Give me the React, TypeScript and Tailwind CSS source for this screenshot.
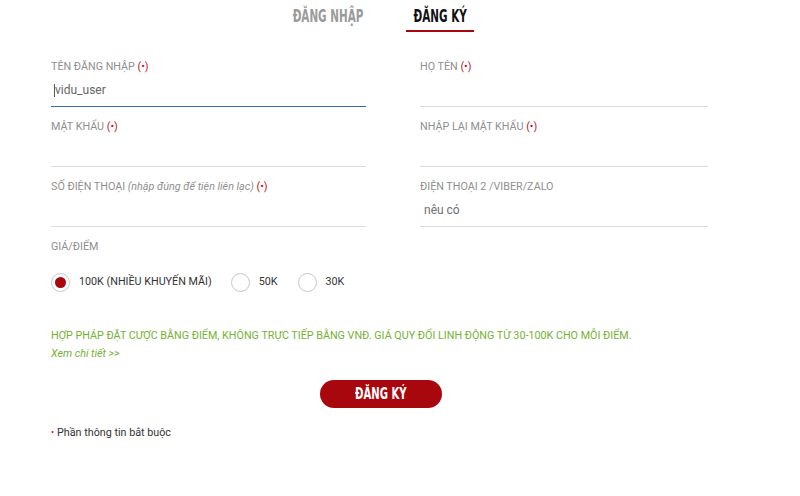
const condensed = "font-['DejaVu_Sans_Condensed','Liberation_Sans_Narrow','Roboto',sans-serif]";

function Req() {
  return <span className="text-[#c0141b]"> (•)</span>;
}

function Field({
  label,
  value,
  focused,
  className,
}: {
  label: React.ReactNode;
  value?: string;
  focused?: boolean;
  className?: string;
}) {
  return (
    <div className={className}>
      <div className="text-[10.75px] leading-[14px] text-[#8f8f8f] h-[14px] whitespace-nowrap">{label}</div>
      <div
        className={
          "h-[33px] flex items-center pl-[4px] text-[12px] " +
          (focused ? "border-b border-[#2f6fb4] text-[#666]" : "border-b border-[#dcdcdc] text-[#6f6f6f]")
        }
      >
        {focused && <span className="w-px h-[13px] bg-[#555] -ml-[1px]" />}
        {value}
      </div>
    </div>
  );
}

function Radio({ checked, label }: { checked?: boolean; label: string }) {
  return (
    <label className="flex items-center gap-[9px]">
      <span className="w-[19px] h-[19px] rounded-full border border-[#c8c8c8] flex items-center justify-center bg-white">
        {checked && <span className="w-[11px] h-[11px] rounded-full bg-[#a8070d]" />}
      </span>
      <span className="text-[10.75px] text-[#333]">{label}</span>
    </label>
  );
}

export default function App() {
  return (
    <div className="w-[800px] h-[496px] bg-white font-['Roboto',sans-serif] relative overflow-hidden">
      <div className={"flex pl-[278px] h-[32px] " + condensed}>
        <div className="w-[100px] h-[30px] flex items-center justify-center pt-[4px]">
          <span className="text-[17px] font-bold text-[#9a9a9a] scale-x-[0.68] whitespace-nowrap">ĐĂNG NHẬP</span>
        </div>
        <div className="ml-[28px] w-[68px] flex flex-col">
          <div className="h-[30px] flex items-center justify-center pt-[4px]">
            <span className="text-[17px] font-bold text-[#111] scale-x-[0.68] whitespace-nowrap">ĐĂNG KÝ</span>
          </div>
          <div className="w-[68px] h-[2px] bg-[#a8070d]" />
        </div>
      </div>

      <div className="pl-[51px] pt-[28px]">
        <div className="grid grid-cols-[315px_288px] gap-x-[54px] gap-y-[13px]">
          <Field label={<>TÊN ĐĂNG NHẬP<Req /></>} value="vidu_user" focused />
          <Field label={<>HỌ TÊN<Req /></>} />
          <Field label={<>MẬT KHẨU<Req /></>} />
          <Field label={<>NHẬP LẠI MẬT KHẨU<Req /></>} />
          <Field
            label={
              <>
                SỐ ĐIỆN THOẠI <i>(nhập đúng để tiện liên lạc)</i>
                <Req />
              </>
            }
          />
          <Field label="ĐIỆN THOẠI 2 /VIBER/ZALO" value="nêu có" />
        </div>

        <div className="mt-[13px] text-[10.75px] leading-[14px] text-[#8f8f8f]">GIÁ/ĐIỂM</div>
        <div className="mt-[19px] flex items-center">
          <Radio checked label="100K (NHIỀU KHUYẾN MÃI)" />
          <div className="ml-[19px]">
            <Radio label="50K" />
          </div>
          <div className="ml-[20px]">
            <Radio label="30K" />
          </div>
        </div>

        <div className="mt-[35px] text-[10.75px] leading-[18px] text-[#74b233]">
          HỢP PHÁP ĐẶT CƯỢC BẰNG ĐIỂM, KHÔNG TRỰC TIẾP BẰNG VNĐ. GIÁ QUY ĐỔI LINH ĐỘNG TỪ 30-100K CHO MỖI ĐIỂM.
          <div className="italic">Xem chi tiết &gt;&gt;</div>
        </div>
      </div>

      <div className="flex justify-center mt-[17px] pr-[38px]">
        <button
          className={
            "w-[122px] h-[28px] rounded-full bg-[#a8070d] text-white flex items-center justify-center " + condensed
          }
        >
          <span className="text-[16px] font-bold scale-x-[0.7] whitespace-nowrap">ĐĂNG KÝ</span>
        </button>
      </div>

      <div className="pl-[51px] mt-[17px] text-[10.75px] text-[#333] flex items-center gap-[3px]">
        <span className="text-[#c0141b] text-[9px]">•</span>
        Phần thông tin bắt buộc
      </div>
    </div>
  );
}
